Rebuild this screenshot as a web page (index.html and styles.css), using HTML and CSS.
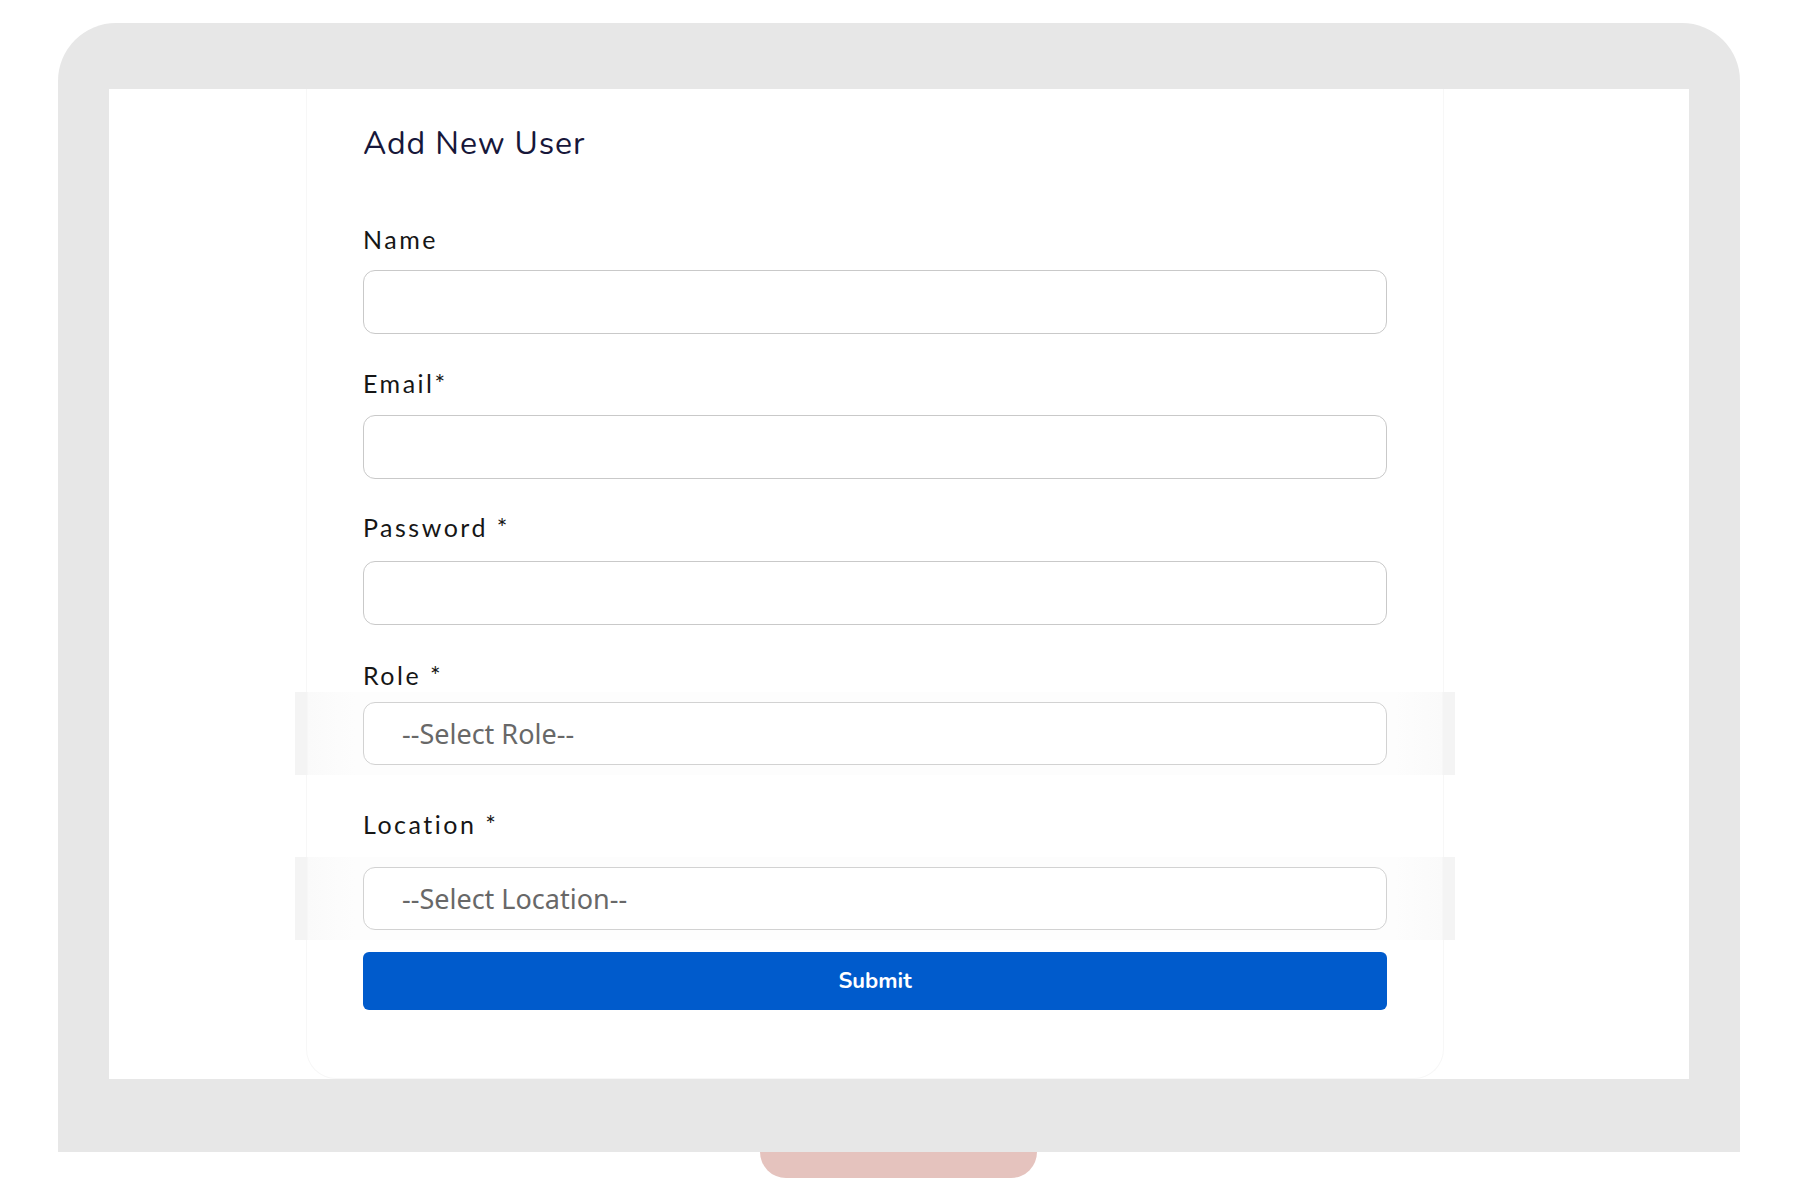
FILE: index.html
```html
<!DOCTYPE html>
<html lang="en">
<head>
<meta charset="utf-8">
<title>Add New User</title>
<link rel="stylesheet" href="styles.css">
</head>
<body>
<div class="page">
  <div class="monitor">
    <div class="screen">
      <div class="card">
        <h1 class="title">Add New User</h1>
        <form class="form">
          <div class="field f-name">
            <label class="label">Name</label>
            <div class="input"></div>
          </div>
          <div class="field f-email">
            <label class="label">Email*</label>
            <div class="input"></div>
          </div>
          <div class="field f-pass">
            <label class="label">Password *</label>
            <div class="input"></div>
          </div>
          <div class="field f-role">
            <label class="label">Role *</label>
            <div class="strip"><div class="select">--Select Role--</div></div>
          </div>
          <div class="field f-loc">
            <label class="label">Location *</label>
            <div class="strip"><div class="select">--Select Location--</div></div>
          </div>
          <div class="submit">Submit</div>
        </form>
      </div>
    </div>
  </div>
  <div class="stand"></div>
</div>
</body>
</html>
```

FILE: styles.css
```css
html, body {
  margin: 0;
  padding: 0;
  background: #ffffff;
}
.page {
  width: 1800px;
  height: 1200px;
  padding-top: 23px;
  box-sizing: border-box;
}
.monitor {
  margin-left: 58px;
  width: 1682px;
  height: 1129px;
  box-sizing: border-box;
  padding: 66px 51px 73px 51px;
  background: #e7e7e7;
  border-radius: 58px 58px 0 0;
}
.screen {
  width: 1580px;
  height: 990px;
  background: #ffffff;
  box-sizing: border-box;
  padding-left: 197px;
}
.stand {
  margin-left: 760px;
  width: 277px;
  height: 26px;
  background: #e5c3be;
  border-radius: 0 0 26px 26px;
}
.card {
  width: 1138px;
  height: 990px;
  box-sizing: border-box;
  border: 1px solid #f7f7f7;
  border-top: none;
  border-radius: 0 0 30px 30px;
  padding: 0 56px;
}
.title {
  margin: 0;
  padding-top: 35px;
  font-family: "Nunito", "Lato", "Open Sans", sans-serif;
  font-weight: 400;
  font-size: 32px;
  line-height: 40px;
  color: #17173a;
  letter-spacing: 0.9px;
}
.form {
  display: flex;
  flex-direction: column;
}
.field {
  display: flex;
  flex-direction: column;
}
.label {
  font-family: "Lato", "Open Sans", sans-serif;
  font-size: 25px;
  line-height: 30px;
  color: #161616;
  letter-spacing: 2.5px;
}
.input {
  height: 64px;
  box-sizing: border-box;
  border: 1.5px solid #c9c9c9;
  border-radius: 12px;
  background: #fff;
}
.f-name { margin-top: 60px; }
.f-name .label { margin-bottom: 16px; }
.f-email { margin-top: 34px; }
.f-email .label { margin-bottom: 17px; }
.f-pass { margin-top: 33px; }
.f-pass .label { margin-bottom: 19px; }
.f-role { margin-top: 35px; }
.f-role .label { margin-bottom: 2px; }
.f-loc { margin-top: 34px; }
.f-loc .label { margin-bottom: 18px; }
.strip {
  margin: 0 -68px;
  padding: 10px 68px;
  background:
    linear-gradient(to right, #f4f4f4 0, #f4f4f4 12px, #fafafa 13px, #fdfdfd 60px, #fdfdfd calc(100% - 60px), #fafafa calc(100% - 13px), #f4f4f4 calc(100% - 12px), #f4f4f4 100%);
}
.select {
  height: 63px;
  box-sizing: border-box;
  border: 1.5px solid #d2d2d2;
  border-radius: 12px;
  background: #fff;
  padding-left: 38px;
  display: flex;
  align-items: center;
  font-family: "Noto Sans", "Open Sans", sans-serif;
  font-size: 27px;
  color: #686868;
}
.submit {
  margin-top: 12px;
  height: 58px;
  border-radius: 6px;
  background: #005bcc;
  color: #ffffff;
  display: flex;
  align-items: center;
  justify-content: center;
  font-family: "Nunito", "Lato", "Open Sans", sans-serif;
  font-weight: 700;
  font-size: 22px;
}
```
